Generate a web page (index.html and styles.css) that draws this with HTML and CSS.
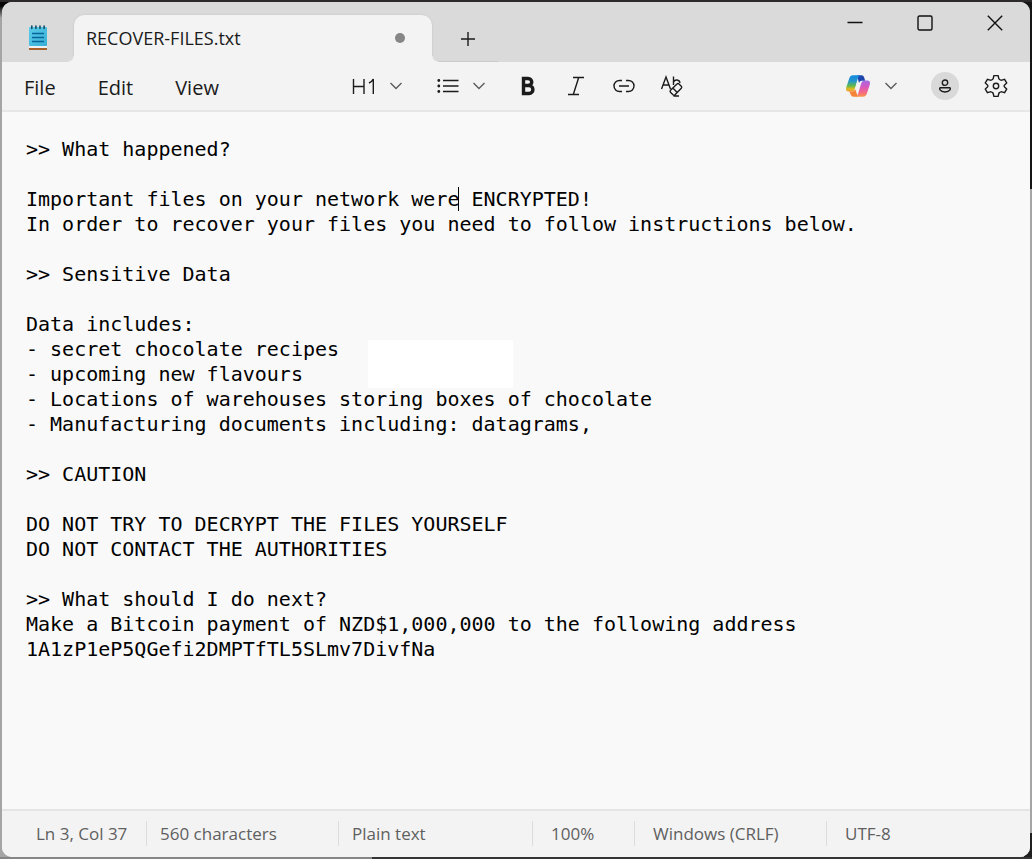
FILE: index.html
```
<!DOCTYPE html>
<html lang="en">
<head>
<meta charset="utf-8">
<meta name="viewport" content="width=device-width, initial-scale=1">
<title>RECOVER-FILES.txt</title>
<link rel="stylesheet" href="styles.css">
</head>
<body>
<main class="window">
  <header class="titlebar">
    <svg class="app-icon" width="20" height="26" viewBox="0 0 20 26" aria-hidden="true">
      <defs><linearGradient id="pad" x1="0" y1="0" x2="1" y2="1"><stop offset="0" stop-color="#5bcdea"/><stop offset="1" stop-color="#38afd6"/></linearGradient></defs>
      <path d="M1 23h18v2H1z" fill="#a9622c"/>
      <path d="M1 21h18v2H1z" fill="#eef2f4"/>
      <rect x="1" y="2" width="18" height="19" rx="1" fill="url(#pad)"/>
      <path d="M4 8.500h12M4 12.500h12M4 16.500h12" stroke="#07659b" stroke-width="1.700"/>
      <path d="M3.800 1v2.500M7.900 1v2.500M12 1v2.500M16.100 1v2.500" stroke="#174e68" stroke-width="1.600" stroke-linecap="round"/>
    </svg>
    <div class="tab">
      <span class="tab-name">RECOVER-FILES.txt</span>
      <span class="unsaved" title="Unsaved changes"></span>
    </div>
    <button class="new-tab" aria-label="New tab"><svg width="16" height="16" viewBox="0 0 16 16"><path d="M8 1v14M1 8h14"/></svg></button>
    <div class="caption">
      <button aria-label="Minimize"><svg width="16" height="16" viewBox="0 0 16 16"><path d="M.5 7.500h15"/></svg></button>
      <button aria-label="Maximize"><svg width="16" height="16" viewBox="0 0 16 16"><rect x="1" y="1" width="14" height="14" rx="1.500"/></svg></button>
      <button aria-label="Close"><svg width="16" height="16" viewBox="0 0 16 16"><path d="M.8.8l14.400 14.400M15.200.8L.8 15.200"/></svg></button>
    </div>
  </header>

  <nav class="toolbar" aria-label="Menu and formatting">
    <div class="menus">
      <button>File</button>
      <button>Edit</button>
      <button>View</button>
    </div>
    <div class="format">
      <button class="split" aria-label="Heading level">
        <svg width="24" height="18" viewBox="0 0 24 18"><path d="M1.500 2v15M12 2v15M1.500 9.500H12M17 6c2-1 3.500-2.300 4.300-4v15"/></svg>
        <svg class="chevron" width="14" height="8" viewBox="0 0 14 8"><path d="M1.500 1l5.500 5.500L12.500 1"/></svg>
      </button>
      <button class="split" aria-label="List">
        <svg width="22" height="16" viewBox="0 0 22 16"><path d="M6 2.500h15.500M6 8h15.500M6 13.500h15.500"/><g class="solid"><circle cx="1.800" cy="2.500" r="1.400"/><circle cx="1.800" cy="8" r="1.400"/><circle cx="1.800" cy="13.500" r="1.400"/></g></svg>
        <svg class="chevron" width="14" height="8" viewBox="0 0 14 8"><path d="M1.500 1l5.500 5.500L12.500 1"/></svg>
      </button>
      <button class="tool" aria-label="Bold"><svg width="16" height="20" viewBox="0 0 16 20"><path class="heavy" d="M3.500 2.500H8c5 0 5 7 0 7H3.500zM3.500 9.500H9c5.200 0 5.200 8 0 8H3.500z"/></svg></button>
      <button class="tool" aria-label="Italic"><svg width="18" height="20" viewBox="0 0 18 20"><path d="M6 1.500h11M1 18.500h11M11.700 1.500l-5.400 17"/></svg></button>
      <button class="tool" aria-label="Link"><svg width="22" height="14" viewBox="0 0 22 14"><path d="M9 1.500H6.500a5.500 5.500 0 0 0 0 11H9M13 1.500h2.500a5.500 5.500 0 0 1 0 11H13M6 7h10"/></svg></button>
      <button class="tool" aria-label="Clear formatting"><svg width="24" height="24" viewBox="0 0 24 24"><path d="M1.500 15L6 3l4.500 12M3 11h6M13.500 2.500V11M13.500 8c1.500-3 6-2.500 6.500 1"/><path d="M10.500 16.200l6.500-6.300q1-.9 2 0l2.300 2.300q.9 1 0 2L15 20.700q-1 .9-2 0l-2.500-2.500q-.9-1 0-2zM12.800 14l4.400 4.400M13.500 22H19"/></svg></button>
    </div>
    <div class="account">
      <button class="split" aria-label="Copilot">
        <svg class="copilot" width="26" height="24" viewBox="0 0 26 24">
          <defs>
            <linearGradient id="cool" x1="0" y1="0" x2="0" y2="1"><stop offset="0" stop-color="#1688df"/><stop offset=".35" stop-color="#2497cf"/><stop offset=".65" stop-color="#62b84a"/><stop offset=".85" stop-color="#e8bb20"/><stop offset="1" stop-color="#ed9430"/></linearGradient>
            <linearGradient id="warm" x1="0" y1="0" x2="0" y2="1"><stop offset="0" stop-color="#a46be5"/><stop offset=".4" stop-color="#d758bd"/><stop offset=".75" stop-color="#f46b82"/><stop offset="1" stop-color="#fa974a"/></linearGradient>
          </defs>
          <path d="M12 1.300h4.500q2 0 2.600 2l1.100 3.500h-3.600q-1.800 0-2.600 2.200z" fill="#1d45ae"/>
          <path d="M8 1.300h7.200q-1.700.8-2.300 3L9.700 15q-.8 2.600-3 2.600H3.900Q0 17.600 1.300 13.200L4.200 4.500Q5.300 1.300 8 1.300z" fill="url(#cool)"/>
          <path d="M4.200 17.600h3q2.200 0 3-2.600l2.600 7.700H8.500q-2 0-2.700-2z" fill="#f58338"/>
          <path d="M19.300 6.500h2.800q3.900 0 2.600 4.400l-2.900 8.800q-1 3-3.700 3h-7.500q1.800-.8 2.500-3L16.300 9q.8-2.500 3-2.500z" fill="url(#warm)"/>
        </svg>
        <svg class="chevron" width="14" height="8" viewBox="0 0 14 8"><path d="M1.500 1l5.500 5.500L12.500 1"/></svg>
      </button>
      <button class="avatar" aria-label="Account"><svg width="14" height="14" viewBox="0 0 14 14"><circle cx="7" cy="3.700" r="2.700"/><path d="M2.500 8.700h9c1.800 0 .9 4.300-4.500 4.300S.7 8.700 2.500 8.700z"/></svg></button>
      <button class="settings" aria-label="Settings"><svg width="24" height="24" viewBox="0 0 24 24"><circle cx="12" cy="12" r="2.700"/><path d="M9.900 1.600h4.200l.7 2.900q.2.700.9 1l.8.500q.6.400 1.300.2l2.800-.9 2.100 3.600-2.100 2q-.5.500-.5 1.100t.5 1.100l2.100 2-2.100 3.600-2.800-.9q-.7-.2-1.300.2l-.8.500q-.7.300-.9 1l-.7 2.900H9.900l-.7-2.900q-.2-.7-.9-1l-.8-.5q-.6-.4-1.300-.2l-2.800.9-2.100-3.600 2.100-2q.5-.5.500-1.100t-.5-1.100l-2.100-2 2.100-3.600 2.800.9q.7.200 1.300-.2l.8-.5q.7-.3.900-1z"/></svg></button>
    </div>
  </nav>

  <section class="editor">
    <span class="patch"></span>
    <textarea class="text" aria-label="Text editor" spellcheck="false">&gt;&gt; What happened?

Important files on your network were ENCRYPTED!
In order to recover your files you need to follow instructions below.

&gt;&gt; Sensitive Data

Data includes:
- secret chocolate recipes
- upcoming new flavours
- Locations of warehouses storing boxes of chocolate
- Manufacturing documents including: datagrams,

&gt;&gt; CAUTION

DO NOT TRY TO DECRYPT THE FILES YOURSELF
DO NOT CONTACT THE AUTHORITIES

&gt;&gt; What should I do next?
Make a Bitcoin payment of NZD$1,000,000 to the following address
1A1zP1eP5QGefi2DMPTfTL5SLmv7DivfNa</textarea>
    <span class="caret"></span>
  </section>

  <footer class="status">
    <span>Ln 3, Col 37</span>
    <span>560 characters</span>
    <span>Plain text</span>
    <span>100%</span>
    <span>Windows (CRLF)</span>
    <span>UTF-8</span>
  </footer>
</main>
</body>
</html>
```
FILE: styles.css
```
* { box-sizing: border-box; }

body {
  margin: 0;
  min-height: 100vh;
  display: flex;
  padding: 2px;
  background:
    linear-gradient(#2c2a2a, #2c2a2a) top / 100% 2px no-repeat,
    linear-gradient(90deg, #858585 36%, #343434 36%) bottom / 100% 2px no-repeat,
    linear-gradient(#151515 22%, #a5a5a5 22% 97%, #202020 97%) right / 8px 100% no-repeat,
    linear-gradient(#050505 6px, #a5a5a5 18px);
  font-family: "Open Sans", "Noto Sans", sans-serif;
  color: #1b1b1b;
}

button {
  display: flex;
  align-items: center;
  justify-content: center;
  padding: 0;
  border: 0;
  background: none;
  font: inherit;
  color: inherit;
}

svg {
  flex: none;
  fill: none;
  stroke: #1b1b1b;
  stroke-width: 1.4;
}

.window {
  flex: 1;
  min-width: 0;
  display: flex;
  flex-direction: column;
  overflow: hidden;
  border-radius: 10px;
  background: #f9f9f9;
}

.titlebar {
  display: flex;
  height: 60px;
  background: #dadada;
}

.app-icon {
  margin: 23px 26px 0;
  stroke: none;
}

.tab {
  position: relative;
  display: flex;
  align-items: center;
  justify-content: space-between;
  width: 358px;
  height: 47px;
  margin-top: 13px;
  padding: 0 27px 2px 12px;
  border-radius: 10px 10px 0 0;
  background: #f3f3f3;
  box-shadow: 0 0 2px #bdbdbd;
  font-size: 18px;
}

/* Outward curves where the tab meets the toolbar */
.tab::before,
.tab::after {
  content: "";
  position: absolute;
  bottom: 0;
  width: 6px;
  height: 6px;
}

.tab::before {
  right: 100%;
  background: radial-gradient(circle at 0 0, #dadada 5px, #f3f3f3 6px);
}

.tab::after {
  left: 100%;
  background: radial-gradient(circle at 100% 0, #dadada 5px, #f3f3f3 6px);
}

.unsaved {
  width: 10px;
  height: 10px;
  border-radius: 50%;
  background: #868686;
}

.new-tab {
  width: 60px;
  margin: 14px 0 0 6px;
  border-bottom: 1px solid #cbcbcb;
}

.caption {
  display: flex;
  height: 41px;
  margin-left: auto;
}

.caption button { width: 70px; }

.caption svg { stroke: #111; }

.toolbar {
  position: relative;
  display: flex;
  align-items: center;
  height: 50px;
  padding: 0 22px 0 22px;
  border-bottom: 2px solid #e7e7e7;
  background: #f3f3f3;
}

.menus {
  display: flex;
  gap: 42px;
  width: 328px;
  padding-top: 2px;
  font-size: 20px;
}

.format,
.account {
  display: flex;
  align-items: center;
}

.split { gap: 13px; }

.split + .split { margin-left: 34px; }

.chevron { stroke: #5c5c5c; }

.format .split + .tool { margin-left: 18px; }

.tool {
  width: 48px;
  height: 40px;
}

.heavy { stroke-width: 3.4; }

.solid {
  fill: #1b1b1b;
  stroke: none;
}

.account {
  margin-left: auto;
  gap: 25px;
}

.copilot { stroke: none; }

.account .split { margin-right: 8px; }

.avatar {
  width: 28px;
  height: 28px;
  border-radius: 50%;
  background: #d9d9d9;
}

.editor {
  position: relative;
  flex: 1;
  display: flex;
  font: 20px/25px "DejaVu Sans Mono", "Liberation Mono", monospace;
}

.text {
  position: relative;
  flex: 1;
  padding: 25px 24px;
  border: 0;
  outline: 0;
  resize: none;
  overflow: auto;
  background: transparent;
  font: inherit;
  color: #000;
}

.patch {
  position: absolute;
  left: 366px;
  top: 228px;
  width: 145px;
  height: 48px;
  background: #fff;
}

.caret {
  position: absolute;
  left: calc(23px + 36ch);
  top: 75px;
  width: 1px;
  height: 24px;
  background: #000;
}

.status {
  display: grid;
  grid-template-columns: 144px 192px 194px 102px 192px 1fr;
  align-items: center;
  height: 48px;
  padding-bottom: 2px;
  border-top: 2px solid #e5e5e5;
  background: #f3f3f3;
  font-size: 17px;
  color: #5f5f5f;
}

.status span {
  padding-left: 18px;
  line-height: 25px;
  white-space: nowrap;
}

.status span:first-child { padding-left: 34px; }

.status span:nth-child(2),
.status span:nth-child(3) { padding-left: 13px; }

.status span + span { border-left: 1px solid #dcdcdc; }
```
